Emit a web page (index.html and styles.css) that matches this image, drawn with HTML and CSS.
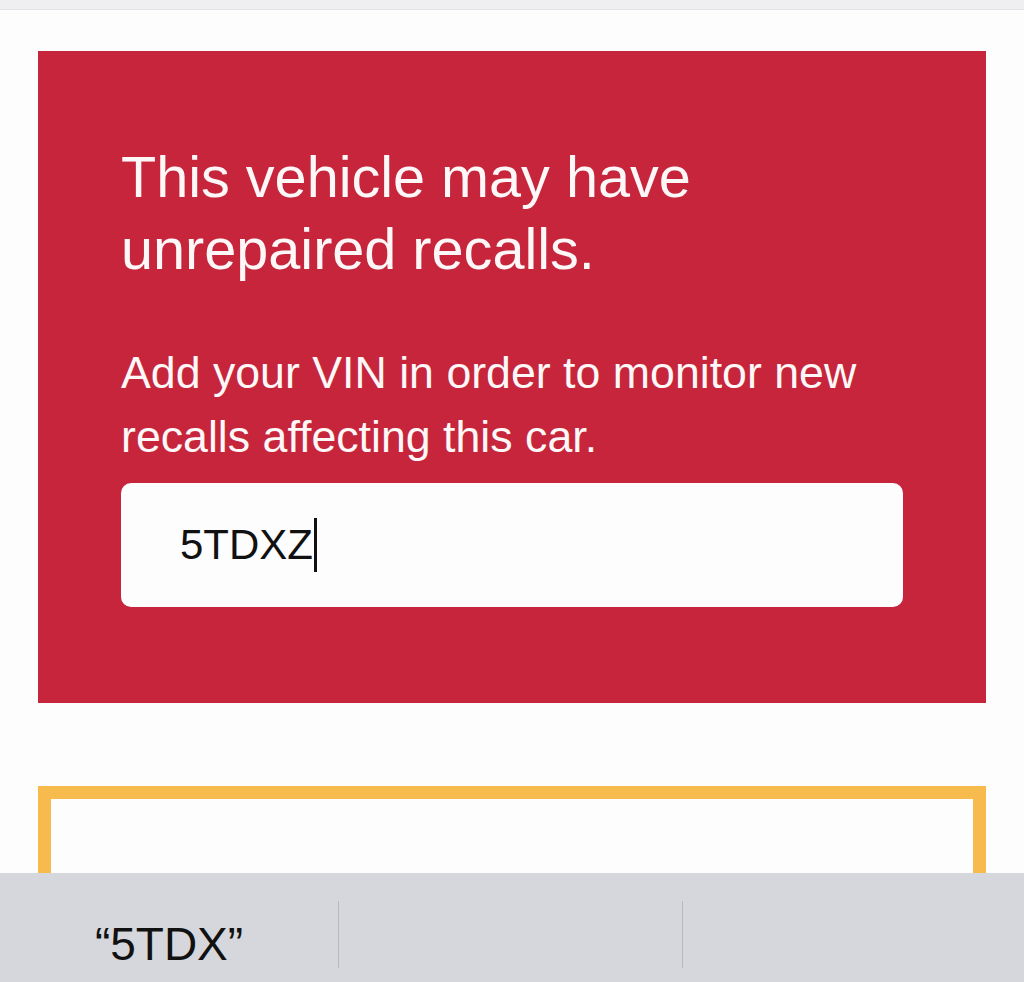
FILE: index.html
```html
<!DOCTYPE html>
<html lang="en">
<head>
    <meta charset="UTF-8">
    <meta name="viewport" content="width=device-width, initial-scale=1.0">
    <title>Recall Check</title>
    <link rel="stylesheet" href="styles.css">
</head>
<body>
    <div class="topbar"></div>
    <div class="page">
        <div class="alert-card">
            <h1>This vehicle may have unrepaired recalls.</h1>
            <p>Add your VIN in order to monitor new recalls affecting this car.</p>
            <div class="vin-input">
                <span class="vin-text">5TDXZ</span><span class="caret"></span>
            </div>
        </div>
        <div class="info-card"></div>
    </div>
    <div class="suggestions">
        <div class="suggestion">&ldquo;5TDX&rdquo;</div>
        <div class="suggestion divided"></div>
        <div class="suggestion divided"></div>
    </div>
</body>
</html>
```

FILE: styles.css
```css
html, body {
    height: 100%;
}
body {
    margin: 0;
    background-color: #fdfdfd;
    font-family: 'Liberation Sans', Arial, sans-serif;
    overflow: hidden;
}
.topbar {
    height: 9px;
    background-color: #efeff2;
    border-bottom: 1px solid #e2e2e6;
}
.page {
    padding: 41px 38px 0;
}
.alert-card {
    background-color: #c6253b;
    color: #fdf7f7;
    padding: 90px 83px 96px;
}
.alert-card h1 {
    margin: 0;
    font-size: 57.6px;
    font-weight: normal;
    line-height: 72px;
    max-width: 620px;
}
.alert-card p {
    margin: 56px 0 14px;
    font-size: 44.7px;
    line-height: 64px;
    max-width: 760px;
}
.vin-input {
    height: 124px;
    background-color: #fdfdfd;
    border-radius: 10px;
    display: flex;
    align-items: center;
    padding-left: 59px;
    color: #111;
    font-size: 42px;
}
.caret {
    display: inline-block;
    width: 3px;
    height: 54px;
    background-color: #111;
    margin-left: 1px;
}
.info-card {
    margin-top: 83px;
    height: 183px;
    border: 13px solid #f6bb4c;
    border-bottom: none;
    background-color: #fdfdfd;
}
.suggestions {
    position: fixed;
    left: 0;
    right: 0;
    bottom: 0;
    height: 109px;
    background-color: #d6d7dc;
    display: grid;
    grid-template-columns: 338px 344px 1fr;
}
.suggestion {
    margin: 28px 0 14px;
    padding-top: 20px;
    text-align: center;
    font-size: 46px;
    line-height: 46px;
    color: #111;
    box-sizing: border-box;
}
.suggestion.divided {
    border-left: 1px solid #b9bac0;
}
```
